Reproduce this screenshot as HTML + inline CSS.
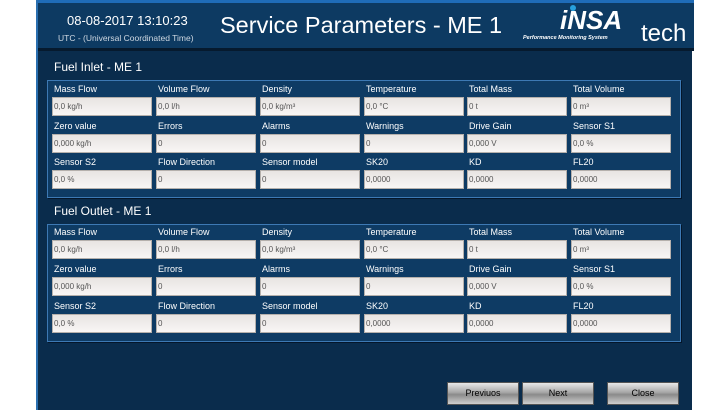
<!DOCTYPE html>
<html><head><style>
*{margin:0;padding:0;box-sizing:border-box}
body{width:728px;height:410px;background:#fff;position:relative;overflow:hidden;font-family:"Liberation Sans",sans-serif}
#app{position:absolute;left:36px;top:0;width:656px;height:410px;background:#0a2c4c;border-left:2px solid #2a6fb0}
#hdr{position:absolute;left:0;top:0;width:656px;height:51px;background:#0d3a62;border-top:3px solid #1f6cb8;border-bottom:3px solid #061a2e}
.t{position:absolute;color:#fff;white-space:nowrap}
.panel{position:absolute;left:9px;width:634px;background:#0e3b64;border:1px solid #3d79b4;box-shadow:1px 1px 0 #04162a}
.lab{position:absolute;color:#fff;font-size:9px}
.inp{position:absolute;width:100px;height:19px;background:linear-gradient(#e8e4e2,#f8f6f5);border:1px solid #b5b0ac;color:#555;font-size:8px;padding-left:1px;line-height:17px}
.btn{position:absolute;top:382px;width:72px;height:23px;background:linear-gradient(#e8e8e8,#a6a6a6 45%,#8a8a8a 55%,#cfcfcf);border:1px solid #555;color:#000;font-size:9px;text-align:center;line-height:21px}
</style></head><body>
<div id="app">
<div id="hdr">
<div class="t" style="left:29px;top:10px;font-size:13px">08-08-2017 13:10:23</div>
<div class="t" style="left:20px;top:30px;font-size:8.5px;color:#cfd8e2">UTC - (Universal Coordinated Time)</div>
<div class="t" style="left:182px;top:9px;font-size:23.5px">Service Parameters - ME 1</div>
<div class="t" style="left:522px;top:2px;font-size:26px;font-style:italic;font-weight:bold;letter-spacing:0px">iNSA</div>
<div style="position:absolute;left:532px;top:2px;width:6px;height:6px;border-radius:50%;background:#27a0dc"></div>
<div class="t" style="left:603px;top:19px;font-size:24px;line-height:24px">tech</div>
<div class="t" style="left:485px;top:32px;font-size:5.5px;font-style:italic;font-weight:bold">Performance Monitoring System</div>
</div>
<div class="t" style="left:16px;top:60px;font-size:12px">Fuel Inlet - ME 1</div>
<div class="panel" style="top:80px;height:118px"></div>
<div class="t" style="left:16px;top:204px;font-size:12px">Fuel Outlet - ME 1</div>
<div class="panel" style="top:224px;height:118px"></div>
<div id="f"></div>
<div class="btn" style="left:409px">Previuos</div>
<div class="btn" style="left:484px">Next</div>
<div class="btn" style="left:569px">Close</div>
</div>
<script>
var L=[["Mass Flow","Volume Flow","Density","Temperature","Total Mass","Total Volume"],["Zero value","Errors","Alarms","Warnings","Drive Gain","Sensor S1"],["Sensor S2","Flow Direction","Sensor model","SK20","KD","FL20"]];
var V=[["0,0 kg/h","0,0 l/h","0,0 kg/m³","0,0 °C","0 t","0 m³"],["0,000 kg/h","0","0","0","0,000 V","0,0 %"],["0,0 %","0","0","0,0000","0,0000","0,0000"]];
var xs=[14,118,222,326,429,533],h="";
[[84,121,157],[227,264,301]].forEach(function(ys){for(var r=0;r<3;r++)for(var c=0;c<6;c++){h+='<div class="lab" style="left:'+(xs[c]+2)+'px;top:'+ys[r]+'px">'+L[r][c]+'</div><div class="inp" style="left:'+xs[c]+'px;top:'+(ys[r]+13)+'px">'+V[r][c]+'</div>';}});
document.getElementById("f").outerHTML=h;
</script>
</body></html>
